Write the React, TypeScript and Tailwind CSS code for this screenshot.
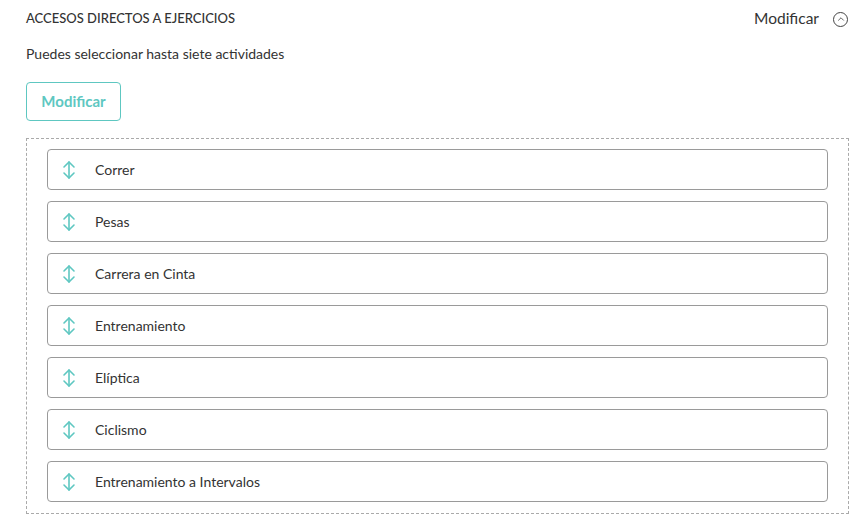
import { ChevronUp } from "lucide-react";

const items = [
  "Correr",
  "Pesas",
  "Carrera en Cinta",
  "Entrenamiento",
  "Elíptica",
  "Ciclismo",
  "Entrenamiento a Intervalos",
];

function MoveIcon() {
  return (
    <svg width="14" height="20" viewBox="0 0 14 20" fill="none" stroke="#5ec7c1" strokeWidth="1.6" strokeLinecap="round" strokeLinejoin="round">
      <path d="M7 2v16" />
      <path d="M2 7l5-5 5 5" />
      <path d="M2 13l5 5 5-5" />
    </svg>
  );
}

export default function App() {
  return (
    <div className="w-[861px] h-[519px] bg-white text-[#333] font-['Lato','Noto_Sans',sans-serif] px-[26px] pt-[10px] overflow-hidden">
      <div className="flex items-center justify-between h-[18px]">
        <h2 className="text-[13px] font-medium uppercase">Accesos directos a ejercicios</h2>
        <button type="button" className="flex items-center gap-[14px] mr-[-13px] text-[15.5px] text-[#333]">
          Modificar
          <span className="flex items-center justify-center w-[15px] h-[15px] rounded-full border border-[#444]">
            <ChevronUp size={10} strokeWidth={2} color="#444" />
          </span>
        </button>
      </div>
      <p className="mt-[17px] text-[14px] leading-[17px]">Puedes seleccionar hasta siete actividades</p>
      <button
        type="button"
        className="mt-[20px] w-[95px] h-[39px] rounded-[4px] border border-[#5ec7c1] text-[15px] font-bold text-[#5ec7c1]"
      >
        Modificar
      </button>
      <div className="mt-[17px] mr-[-14px] border border-dashed border-[#aaa] px-[20px] pt-[10px] pb-[11px] flex flex-col gap-[11px]">
        {items.map((item) => (
          <div key={item} className="flex items-center h-[41px] rounded-[4px] border border-[#9a9a9a] pl-[14px]">
            <MoveIcon />
            <span className="ml-[19px] text-[14px] text-[#333]">{item}</span>
          </div>
        ))}
      </div>
    </div>
  );
}
